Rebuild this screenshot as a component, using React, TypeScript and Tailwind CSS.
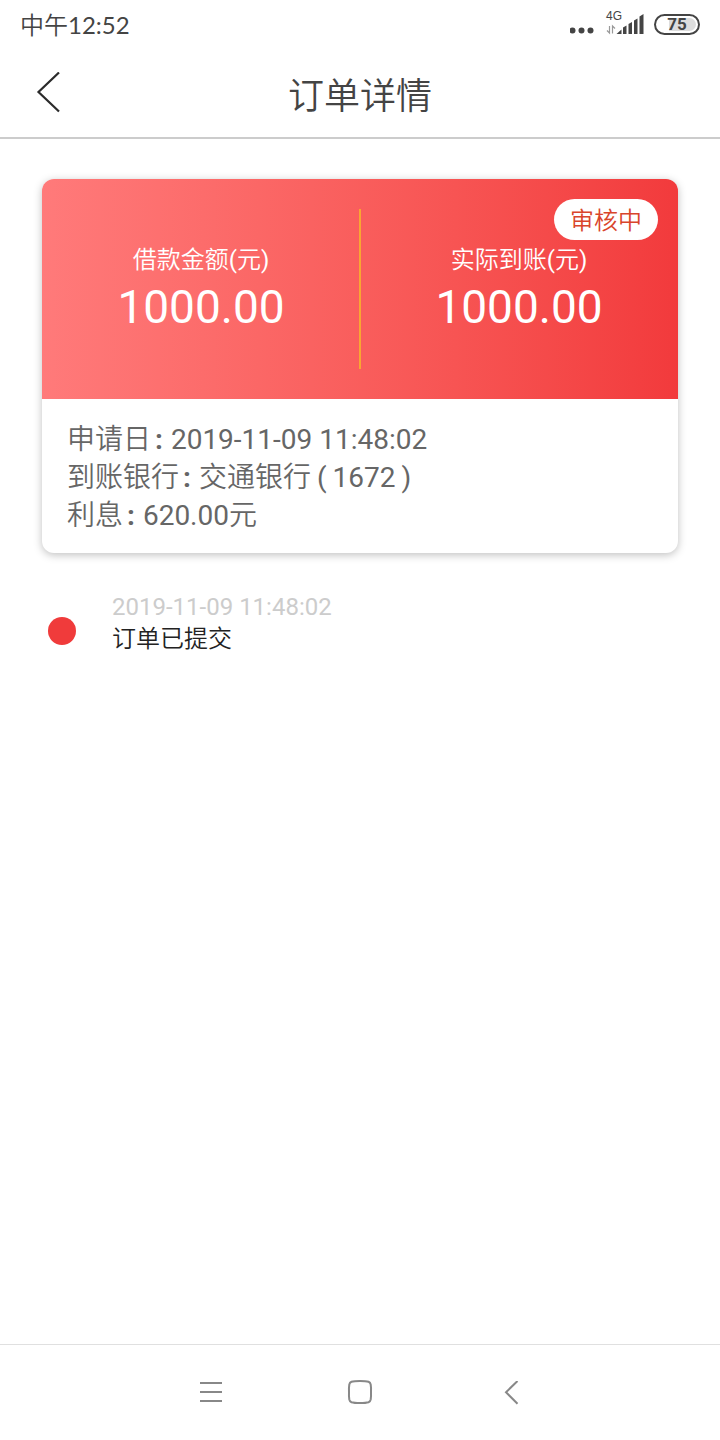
import type { ReactNode } from "react";

const amounts = [
  { label: "借款金额", value: "1000.00" },
  { label: "实际到账", value: "1000.00" },
];

const timeline = [{ time: "2019-11-09 11:48:02", text: "订单已提交" }];

function StatusBar() {
  return (
    <div className="flex h-12 items-center justify-between px-5 pt-0.5 text-[#444444]">
      <span className="font-[Lato,'Noto_Sans_CJK_SC',sans-serif] text-2xl">
        <span className="font-[350]">中午</span>12:52
      </span>
      <div className="flex items-center pb-0.5">
        <svg width="24" height="24" viewBox="0 0 24 24" fill="currentColor" aria-hidden>
          <circle cx="2.500" cy="18.500" r="3" />
          <circle cx="11.500" cy="18.500" r="3" />
          <circle cx="20.500" cy="18.500" r="3" />
        </svg>
        <div className="relative ml-3 h-6 w-10">
          <span className="absolute -top-0.5 left-0 font-['Liberation_Sans',sans-serif] text-xs leading-none">4G</span>
          <svg className="h-6 w-10" viewBox="0 0 40 24" fill="currentColor" aria-hidden>
            <path
              d="M3.500 14V21L1 18.500M6.500 21.500V14L9 16.500"
              stroke="#999999"
              strokeWidth="1.200"
              fill="none"
            />
            <path d="M10.500 22L15.500 17.500V22Z" />
            <path d="M17 22V15.500L20.500 13.500V22Z" />
            <path d="M22.500 22V12L26 10V22Z" />
            <path d="M28 22V8.500L31.500 6.500V22Z" />
            <path d="M33.500 22V4.500L37.500 2V22Z" />
          </svg>
        </div>
        <div className="ml-2 flex h-[21px] w-[46px] items-center justify-center rounded-full border-2 border-[#444444] bg-white p-0.5">
          <span className="flex h-full w-full items-center justify-center rounded-full bg-linear-to-r from-white from-30% to-[#dddddd] to-30% font-[Roboto,sans-serif] text-[17px] leading-none font-bold">
            75
          </span>
        </div>
      </div>
    </div>
  );
}

function Header() {
  return (
    <header className="flex h-[91px] items-center border-b-2 border-[#cccccc] px-8">
      <button type="button" aria-label="返回" className="w-[34px] p-1">
        <svg width="26" height="42" viewBox="0 0 26 42" fill="none" stroke="#2b2b2b" strokeWidth="2.200" aria-hidden>
          <path d="M23 0.500L2.500 20L23 39.500" />
        </svg>
      </button>
      <h1 className="mr-[34px] flex-1 pt-2 text-center text-4xl font-[350] text-[#444444]">订单详情</h1>
    </header>
  );
}

function InfoRow({ label, children }: { label: string; children: ReactNode }) {
  return (
    <div className="flex">
      <dt className="font-[350]">
        {label}
        <span className="ml-1 font-bold">:</span>
      </dt>
      <dd className="ml-2">{children}</dd>
    </div>
  );
}

function OrderCard() {
  return (
    <section className="overflow-hidden rounded-xl bg-white shadow-[0_2px_8px_rgba(0,0,0,0.25)]">
      <div className="relative flex h-[220px] items-center bg-linear-to-r from-[#ff7a7a] to-[#f23a3c] pt-1 text-white">
        {amounts.map((item) => (
          <div key={item.label} className="flex-1 text-center">
            <p className="text-2xl leading-8">
              <span className="font-[350]">{item.label}</span>(<span className="font-[350]">元</span>)
            </p>
            <p className="text-[46px] leading-[62px]">{item.value}</p>
          </div>
        ))}
        <span className="absolute inset-y-[30px] left-1/2 w-0.5 -translate-x-1/2 bg-[#f9a532]" />
        <span className="absolute top-5 right-5 rounded-full bg-white px-4 pt-1 pb-px text-2xl leading-9 font-[350] text-[#d9452b]">
          审核中
        </span>
      </div>
      <dl className="px-[25px] pt-[22px] pb-[18px] text-[28px] leading-[38px] text-[#666666]">
        <InfoRow label="申请日">2019-11-09 11:48:02</InfoRow>
        <InfoRow label="到账银行">
          <span className="font-[350]">交通银行</span>
          <span className="px-1.5">(</span>1672<span className="px-1.5">)</span>
        </InfoRow>
        <InfoRow label="利息">
          620.00<span className="font-[350]">元</span>
        </InfoRow>
      </dl>
    </section>
  );
}

function Timeline() {
  return (
    <ul className="mt-[38px] px-1.5">
      {timeline.map((step) => (
        <li key={step.time} className="flex items-center gap-9">
          <span className="mt-4 size-7 rounded-full bg-[#f03b3b]" />
          <div className="text-2xl leading-8">
            <p className="text-[#cccccc]">{step.time}</p>
            <p className="font-[350] text-[#222222]">{step.text}</p>
          </div>
        </li>
      ))}
    </ul>
  );
}

function NavBar() {
  return (
    <nav className="flex h-24 items-center justify-center gap-[126px] border-t border-[#e0e0e0] text-[#888888]">
      <button type="button" aria-label="菜单">
        <svg width="24" height="24" viewBox="0 0 24 24" fill="none" stroke="currentColor" strokeWidth="2" aria-hidden>
          <path d="M2 2H24M2 11H24M2 20H24" />
        </svg>
      </button>
      <button type="button" aria-label="主页">
        <svg
          width="24"
          height="24"
          viewBox="0 0 24 24"
          fill="none"
          stroke="currentColor"
          strokeWidth="2"
          className="overflow-visible"
          aria-hidden
        >
          <path d="M12 0Q18 0 20.500 0.800Q22.300 1.500 22.700 3.500Q23.200 6.500 23 11Q23.200 15.500 22.700 18.500Q22.300 20.500 20.500 21.200Q18 22 12 22Q6 22 3.500 21.200Q1.700 20.500 1.300 18.500Q0.800 15.500 1 11Q0.800 6.500 1.300 3.500Q1.700 1.500 3.500 0.800Q6 0 12 0Z" />
        </svg>
      </button>
      <button type="button" aria-label="后退">
        <svg width="24" height="24" viewBox="0 0 24 24" fill="none" stroke="currentColor" strokeWidth="2" aria-hidden>
          <path d="M19.500 0L8 11.200L19.500 22.800" />
        </svg>
      </button>
    </nav>
  );
}

export default function App() {
  return (
    <div className="flex min-h-screen flex-col bg-white font-[Roboto,'Noto_Sans_CJK_SC',sans-serif]">
      <StatusBar />
      <Header />
      <main className="flex-1 px-[42px] pt-10">
        <OrderCard />
        <Timeline />
      </main>
      <NavBar />
    </div>
  );
}
